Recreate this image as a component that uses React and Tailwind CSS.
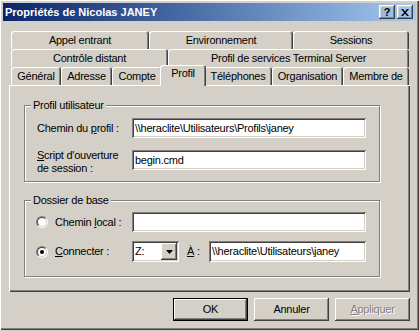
const RAISED =
  'shadow-[inset_-1px_-1px_#404040,inset_1px_1px_#ffffff,inset_-2px_-2px_#808080,inset_2px_2px_#d4d0c8]';
const SUNKEN =
  'shadow-[inset_1px_1px_#808080,inset_-1px_-1px_#ffffff,inset_2px_2px_#404040,inset_-2px_-2px_#d4d0c8]';

const Tab = ({ children, className = '' }) => (
  <div
    className={`flex h-[18px] shrink-0 items-center justify-center whitespace-nowrap rounded-t-[3px] bg-[#d4d0c8] pt-px shadow-[inset_1px_1px_#ffffff,inset_-1px_0_#404040,inset_-2px_0_#808080] ${className}`}
  >
    {children}
  </div>
);

const Group = ({ title, className = '', children }) => (
  <div
    className={`relative h-[77px] w-[356px] border border-[#808080] shadow-[inset_1px_1px_#ffffff,1px_1px_#ffffff] ${className}`}
  >
    <span className="absolute -top-[7px] left-[6px] bg-[#d4d0c8] px-[2px] leading-[13px]">{title}</span>
    {children}
  </div>
);

const Field = ({ value = '', className = '' }) => (
  <div className={`h-[20px] shrink-0 bg-white pl-[3px] leading-[20px] whitespace-nowrap ${SUNKEN} ${className}`}>
    {value}
  </div>
);

const Radio = ({ checked }) => (
  <span className="flex h-[12px] w-[12px] shrink-0 items-center justify-center rounded-full border border-t-[#808080] border-l-[#808080] border-b-white border-r-white">
    <span className="flex h-[10px] w-[10px] items-center justify-center rounded-full border border-t-[#404040] border-l-[#404040] border-b-[#d4d0c8] border-r-[#d4d0c8] bg-white">
      {checked && <span className="h-[4px] w-[4px] rounded-full bg-black" />}
    </span>
  </span>
);

const Button = ({ children, className = '' }) => (
  <div className={`flex h-[23px] w-[75px] items-center justify-center bg-[#d4d0c8] ${RAISED} ${className}`}>
    {children}
  </div>
);

export default function App() {
  return (
    <div className="h-[331px] w-[419px] bg-[#d4d0c8] font-['Liberation_Sans',Arial,sans-serif] text-[11px] leading-[13px] tracking-[-0.25px] text-black">
      <div className="h-[330px] w-[419px] p-[3px] shadow-[inset_1px_1px_#ffffff,inset_-1px_-1px_#404040,inset_-2px_-2px_#808080]">
        {/* title bar */}
        <div className="flex h-[18px] items-center bg-linear-to-r from-[#0a246a] to-[#a6caf0] pl-[2px] pr-[3px]">
          <span className="flex-1 text-[11px] font-bold tracking-normal text-white">Propriétés de Nicolas JANEY</span>
          <div className={`flex h-[14px] w-[16px] items-center justify-center text-[11px] font-bold tracking-normal ${RAISED}`}>
            ?
          </div>
          <div className={`ml-[2px] flex h-[14px] w-[16px] items-center justify-center ${RAISED}`}>
            <svg width="8" height="7" viewBox="0 0 8 7">
              <path d="M0 0h2l2 2.4L6 0h2L5 3.5 8 7H6L4 4.6 2 7H0l3-3.5z" fill="#000" />
            </svg>
          </div>
        </div>

        {/* tabs */}
        <div className="mt-[10px] ml-[8px]">
          <div className="flex">
            <Tab className="w-[138px]">Appel entrant</Tab>
            <Tab className="w-[144px]">Environnement</Tab>
            <Tab className="w-[116px]">Sessions</Tab>
          </div>
          <div className="flex">
            <Tab className="w-[157px]">Contrôle distant</Tab>
            <Tab className="w-[241px]">Profil de services Terminal Server</Tab>
          </div>
          <div className="flex h-[18px] items-end">
            <Tab className="w-[50px]">Général</Tab>
            <Tab className="w-[51px]">Adresse</Tab>
            <Tab className="w-[50px]">Compte</Tab>
            <div className="relative z-10 -mx-[2px] -mb-px flex h-[21px] w-[46px] shrink-0 items-start justify-center rounded-t-[3px] bg-[#d4d0c8] pt-[2px] shadow-[inset_1px_1px_#ffffff,inset_-1px_0_#404040,inset_-2px_0_#808080]">
              Profil
            </div>
            <Tab className="w-[68px]">Téléphones</Tab>
            <Tab className="w-[71px]">Organisation</Tab>
            <Tab className="w-[66px]">Membre de</Tab>
          </div>
        </div>

        {/* panel */}
        <div className="ml-[6px] h-[207px] w-[401px] bg-[#d4d0c8] pl-[15px] pt-[20px] shadow-[inset_1px_1px_#ffffff,inset_-1px_-1px_#404040,inset_-2px_-2px_#808080]">
          <Group title="Profil utilisateur">
            <div className="pl-[12px] pt-[12px]">
              <div className="flex items-center">
                <span className="w-[95px] shrink-0">
                  Chemin du <u>p</u>rofil :
                </span>
                <Field className="w-[234px]" value={'\\\\heraclite\\Utilisateurs\\Profils\\janey'} />
              </div>
              <div className="mt-[12px] flex items-start">
                <span className="-mt-px w-[95px] shrink-0 leading-[13px]">
                  <u>S</u>cript d'ouverture
                  <br />
                  de session :
                </span>
                <Field className="w-[234px]" value="begin.cmd" />
              </div>
            </div>
          </Group>

          <Group title="Dossier de base" className="mt-[18px]">
            <div className="pl-[11px] pt-[11px]">
              <div className="flex h-[20px] items-center">
                <Radio />
                <span className="ml-[7px] w-[77px] shrink-0">
                  Chemin <u>l</u>ocal :
                </span>
                <Field className="w-[234px]" />
              </div>
              <div className="mt-[9px] flex h-[21px] items-center">
                <Radio checked />
                <span className="ml-[7px] w-[77px] shrink-0">
                  <u>C</u>onnecter :
                </span>
                <div className={`flex h-[21px] w-[47px] shrink-0 bg-white p-[2px] ${SUNKEN}`}>
                  <span className="flex-1 pl-px leading-[17px]">Z:</span>
                  <span className={`flex w-[16px] items-center justify-center bg-[#d4d0c8] ${RAISED}`}>
                    <svg width="7" height="4" viewBox="0 0 7 4">
                      <path d="M0 0h7L3.5 4z" fill="#000" />
                    </svg>
                  </span>
                </div>
                <span className="ml-[8px] w-[22px] shrink-0">
                  <u>À</u> :
                </span>
                <Field className="h-[21px] w-[157px] leading-[21px]" value={'\\\\heraclite\\Utilisateurs\\janey'} />
              </div>
            </div>
          </Group>
        </div>

        {/* buttons */}
        <div className="mt-[6px] flex gap-[6px] pl-[170px]">
          <Button className="border border-black">OK</Button>
          <Button>Annuler</Button>
          <Button className="text-[#808080] [text-shadow:1px_1px_0_#ffffff]">
            <span>
              <u>A</u>ppliquer
            </span>
          </Button>
        </div>
      </div>
    </div>
  );
}
